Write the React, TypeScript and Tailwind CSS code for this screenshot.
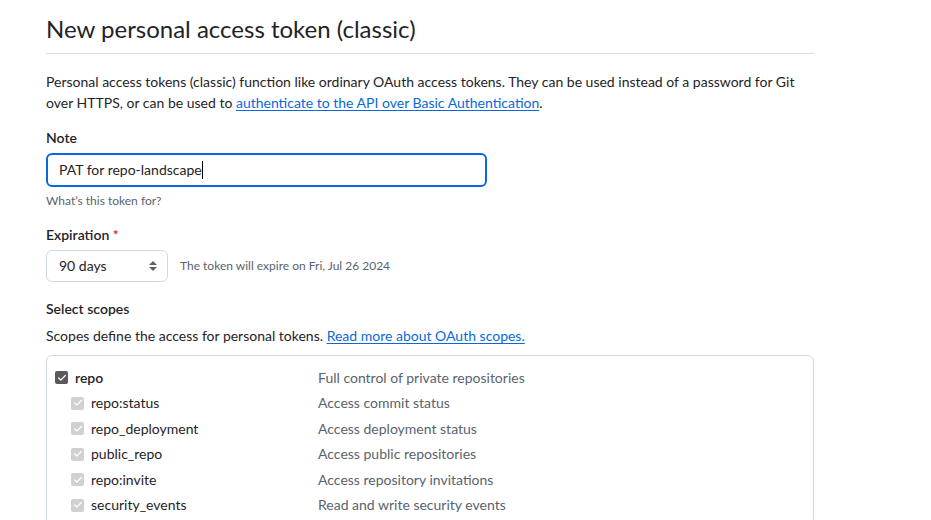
import { Check } from 'lucide-react'

const scopes = [
  { name: 'repo:status', desc: 'Access commit status' },
  { name: 'repo_deployment', desc: 'Access deployment status' },
  { name: 'public_repo', desc: 'Access public repositories' },
  { name: 'repo:invite', desc: 'Access repository invitations' },
  { name: 'security_events', desc: 'Read and write security events' },
]

function Box({ disabled }: { disabled?: boolean }) {
  return (
    <span
      className={`flex items-center justify-center w-[13px] h-[13px] rounded-[2px] ${disabled ? 'bg-[#d1d1d1]' : 'bg-[#5a5a5a]'}`}
    >
      <Check size={10} strokeWidth={3} className="text-white" />
    </span>
  )
}

export default function App() {
  return (
    <div className="min-h-screen bg-white text-[#1f2328] font-['Lato',sans-serif] text-sm">
      <div className="w-[768px] ml-[46px]">
        <div className="pt-[12px] pb-[7px] border-b border-[#d8dee4]">
          <h1 className="text-[24px] leading-[34px] font-normal">New personal access token (classic)</h1>
        </div>

        <p className="mt-[17px] leading-[21px]">
          Personal access tokens (classic) function like ordinary OAuth access tokens. They can be used instead of a password for Git over HTTPS, or can be used to{' '}
          <a className="text-[#0969da] underline underline-offset-2">authenticate to the API over Basic Authentication</a>.
        </p>

        <div className="mt-[14px]">
          <div className="font-semibold leading-[21px]">Note</div>
          <div className="mt-[5px] w-[441px] h-[34px] rounded-[6px] border-2 border-[#0969da] flex items-center px-[11px]">
            <span>PAT for repo-landscape</span>
            <span className="w-px h-[18px] bg-black" />
          </div>
          <div className="mt-[6px] text-xs text-[#59636e]">What’s this token for?</div>
        </div>

        <div className="mt-[15px]">
          <div className="font-semibold leading-[21px]">
            Expiration <span className="text-[#d1242f]">*</span>
          </div>
          <div className="mt-[5px] flex items-center gap-3">
            <div className="w-[122px] h-[32px] rounded-[6px] border border-[#d1d9e0] flex items-center justify-between pl-[12px] pr-[9px]">
              <span>90 days</span>
              <svg width="10" height="14" viewBox="0 0 10 14" fill="#59636e">
                <path d="M5 2 L9 6 H1 Z" />
                <path d="M5 12 L9 8 H1 Z" />
              </svg>
            </div>
            <span className="text-xs text-[#59636e]">The token will expire on Fri, Jul 26 2024</span>
          </div>
        </div>

        <div className="mt-[16px]">
          <div className="font-semibold leading-[21px]">Select scopes</div>
          <p className="mt-[6px] leading-[21px]">
            Scopes define the access for personal tokens.{' '}
            <a className="text-[#0969da] underline underline-offset-2">Read more about OAuth scopes.</a>
          </p>
        </div>

        <div className="mt-[9px] border border-[#d1d9e0] rounded-[6px] pt-[11px] pb-[8px] px-[8px]">
          <div className="flex items-center h-[21px]">
            <div className="w-[263px] flex items-center gap-[7px]">
              <Box />
              <span className="font-semibold">repo</span>
            </div>
            <span className="text-[#59636e]">Full control of private repositories</span>
          </div>
          {scopes.map((s) => (
            <div key={s.name} className="flex items-center h-[21px] mt-[4.6px]">
              <div className="w-[263px] flex items-center gap-[7px] pl-[16px]">
                <Box disabled />
                <span>{s.name}</span>
              </div>
              <span className="text-[#59636e]">{s.desc}</span>
            </div>
          ))}
        </div>
      </div>
    </div>
  )
}
